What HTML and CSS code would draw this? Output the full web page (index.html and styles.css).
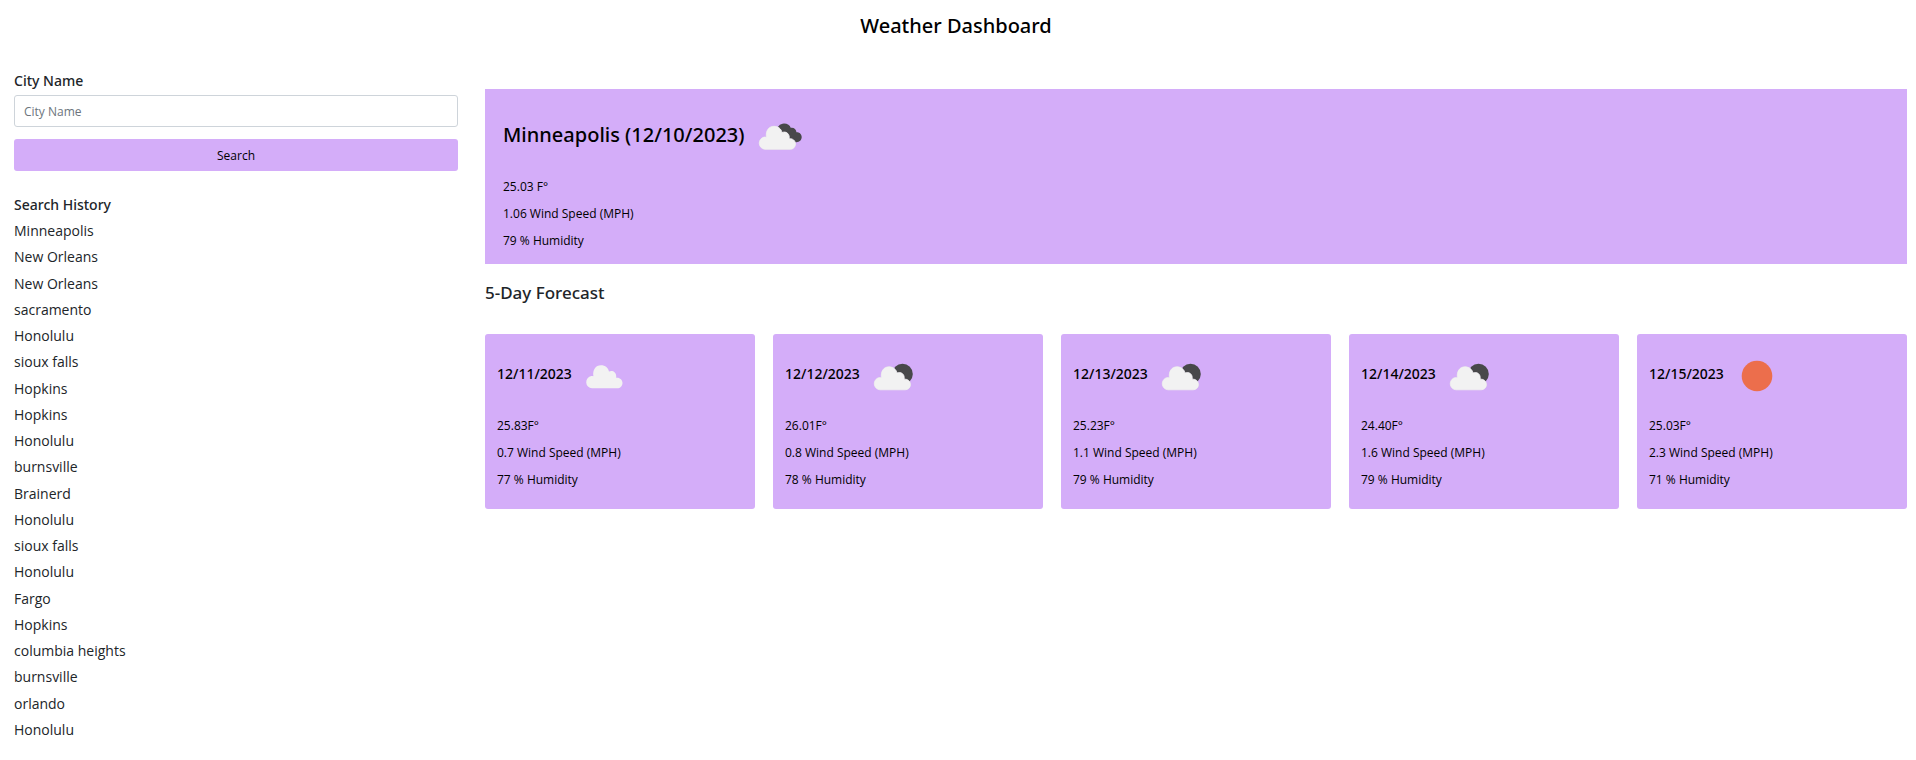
FILE: index.html
```html
<!DOCTYPE html>
<html lang="en">
<head>
<meta charset="utf-8">
<meta name="viewport" content="width=device-width, initial-scale=1">
<title>Weather Dashboard</title>
<link rel="stylesheet" href="styles.css">
</head>
<body>
<svg class="sprite" aria-hidden="true">
  <symbol id="cloud" viewBox="0 0 60 60">
    <path d="M17 42.3a6.2 6.2 0 0 1-.6-12.3c.7 0 1.300 0 2 .3C17.500 24 20.500 19.300 26 19.300c4.300 0 7.300 2.700 8 6.300 3.300-1.600 7.300.6 7.200 4.600v1.600c3.500-.5 6.300 2 6.300 5.200 0 3-2.300 5.300-5.300 5.300z"/>
  </symbol>
  <symbol id="back-cloud" viewBox="0 0 60 60">
    <path d="M29 25c-.5-5 3-8.500 7-8.500 3.500 0 6 1.800 6.700 4.300 3-.6 5.600 1.500 5.800 4.400 3-.3 5.200 2 5.200 4.900 0 3-2.200 5.200-5.200 5.200H44z"/>
  </symbol>
</svg>
<header class="header"><h1 class="title">Weather Dashboard</h1></header>
<div class="layout">
  <aside class="sidebar">
    <form class="search">
      <label class="search-label" for="city">City Name</label>
      <input class="search-input" id="city" type="text" placeholder="City Name">
      <button class="search-button" type="button">Search</button>
    </form>
    <h2 class="history-title">Search History</h2>
    <ul class="history">
      <li>Minneapolis</li><li>New Orleans</li><li>New Orleans</li><li>sacramento</li><li>Honolulu</li>
      <li>sioux falls</li><li>Hopkins</li><li>Hopkins</li><li>Honolulu</li><li>burnsville</li>
      <li>Brainerd</li><li>Honolulu</li><li>sioux falls</li><li>Honolulu</li><li>Fargo</li>
      <li>Hopkins</li><li>columbia heights</li><li>burnsville</li><li>orlando</li><li>Honolulu</li>
    </ul>
  </aside>
  <main class="main">
    <section class="current">
      <div class="heading">
        <h2 class="current-title">Minneapolis (12/10/2023)</h2>
        <svg class="icon" viewBox="0 0 60 60" role="img" aria-label="Broken clouds"><use class="dark" href="#back-cloud"/><use class="light edged" href="#cloud"/></svg>
      </div>
      <p>25.03 F°</p><p>1.06 Wind Speed (MPH)</p><p>79 % Humidity</p>
    </section>
    <h2 class="forecast-title">5-Day Forecast</h2>
    <section class="forecast">
      <article class="card">
        <div class="heading"><h3 class="card-title">12/11/2023</h3>
        <svg class="icon" viewBox="0 0 60 60" role="img" aria-label="Cloudy"><use class="light" href="#cloud"/></svg></div>
        <p>25.83F°</p><p>0.7 Wind Speed (MPH)</p><p>77 % Humidity</p>
      </article>
      <article class="card">
        <div class="heading"><h3 class="card-title">12/12/2023</h3>
        <svg class="icon" viewBox="0 0 60 60" role="img" aria-label="Partly cloudy night"><circle class="dark" cx="39.500" cy="28" r="10.300"/><use class="light edged" href="#cloud" y="1.500"/></svg></div>
        <p>26.01F°</p><p>0.8 Wind Speed (MPH)</p><p>78 % Humidity</p>
      </article>
      <article class="card">
        <div class="heading"><h3 class="card-title">12/13/2023</h3>
        <svg class="icon" viewBox="0 0 60 60" role="img" aria-label="Partly cloudy night"><circle class="dark" cx="39.500" cy="28" r="10.300"/><use class="light edged" href="#cloud" y="1.500"/></svg></div>
        <p>25.23F°</p><p>1.1 Wind Speed (MPH)</p><p>79 % Humidity</p>
      </article>
      <article class="card">
        <div class="heading"><h3 class="card-title">12/14/2023</h3>
        <svg class="icon" viewBox="0 0 60 60" role="img" aria-label="Partly cloudy night"><circle class="dark" cx="39.500" cy="28" r="10.300"/><use class="light edged" href="#cloud" y="1.500"/></svg></div>
        <p>24.40F°</p><p>1.6 Wind Speed (MPH)</p><p>79 % Humidity</p>
      </article>
      <article class="card">
        <div class="heading"><h3 class="card-title">12/15/2023</h3>
        <svg class="icon" viewBox="0 0 60 60" role="img" aria-label="Clear"><circle class="sun" cx="30" cy="30" r="15.300"/></svg></div>
        <p>25.03F°</p><p>2.3 Wind Speed (MPH)</p><p>71 % Humidity</p>
      </article>
    </section>
  </main>
</div>
</body>
</html>
```
FILE: styles.css
```css
* { box-sizing: border-box; }
body {
  margin: 0;
  min-height: 100vh;
  display: flex;
  flex-direction: column;
  background: #fff;
  color: #212529;
  font-family: "Open Sans", "Noto Sans", sans-serif;
  font-size: 14px;
  line-height: 26px;
}
h1, h2, h3, p, ul { margin: 0; padding: 0; }
h1, h2, h3, .search-label { font-family: "Noto Sans", "Open Sans", sans-serif; font-weight: 500; }
.sprite { display: none; }
.header { padding: 12px 16px 12px 12px; text-align: center; color: #000; }
.title { font-size: 20px; line-height: 28px; }
.layout {
  flex: 1;
  display: grid;
  grid-template-columns: 444fr 1422fr;
  gap: 27px;
  padding: 16px 9px 17px 14px;
}
.sidebar { display: flex; flex-direction: column; }
.search { display: flex; flex-direction: column; }
.search-label { padding-bottom: 2px; line-height: 25px; }
.search-input {
  height: 32px;
  margin-bottom: 12px;
  padding: 0 9px;
  border: 1px solid #ced4da;
  border-radius: 3px;
  color: #212529;
  font: inherit;
  font-size: 12px;
}
.search-input::placeholder { color: #6c757d; opacity: 1; }
.search-button {
  height: 32px;
  padding: 2px 9px 0;
  border: 0;
  border-radius: 3px;
  background: #d4adf9;
  color: #000;
  font: inherit;
  font-size: 12px;
}
.history-title { margin-top: 21px; font-size: 14px; line-height: 26px; }
.history {
  flex: 1;
  display: flex;
  flex-direction: column;
  justify-content: space-between;
  list-style: none;
}
.main { padding-top: 21px; }
.current, .card {
  background: #d4adf9;
  color: #000;
  font-size: 12px;
  font-weight: 500;
  line-height: 27px;
}
.current { padding: 18px 18px 10px; }
.heading { display: flex; align-items: center; gap: 3px; margin-bottom: 6px; }
.current-title { padding-bottom: 5px; font-size: 20px; }
.icon { width: 60px; height: 60px; flex: none; }
.forecast-title { padding: 16px 0 28px; font-size: 17px; }
.forecast { display: grid; grid-template-columns: repeat(5, 1fr); gap: 18px; }
.card { padding: 12px 12px 16px; border-radius: 3px; }
.card-title { padding-bottom: 5px; font-size: 14px; }
.light { fill: #f2f2f2; }
.edged { stroke: #e6e2ea; stroke-width: 1px; paint-order: stroke; }
.dark { fill: #48484a; }
.sun { fill: #ec6e4c; }
```
